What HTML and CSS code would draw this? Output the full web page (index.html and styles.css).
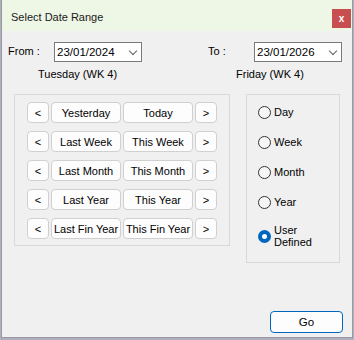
FILE: index.html
```html
<!doctype html>
<html lang="en">
<head>
  <meta charset="UTF-8">
  <title>Select Date Range</title>
  <link rel="stylesheet" href="styles.css">
</head>
<body>
<div id="dlg">
  <div id="dlg-title">
    <span class="title-text">Select Date Range</span>
    <button class="close" title="Close">x</button>
  </div>
  <div id="dlg-body">
    <div class="dates">
      <div class="field">
        <label>From :</label>
        <div class="combo"><span>23/01/2024</span><i class="chev"></i></div>
      </div>
      <div class="field">
        <label>To :</label>
        <div class="combo"><span>23/01/2026</span><i class="chev"></i></div>
      </div>
      <div class="day from-day">Tuesday (WK 4)</div>
      <div class="day to-day">Friday (WK 4)</div>
    </div>

    <div class="groups">
      <div class="box quick">
        <button class="nav">&lt;</button><button>Yesterday</button><button>Today</button><button class="nav">&gt;</button>
        <button class="nav">&lt;</button><button>Last Week</button><button>This Week</button><button class="nav">&gt;</button>
        <button class="nav">&lt;</button><button>Last Month</button><button>This Month</button><button class="nav">&gt;</button>
        <button class="nav">&lt;</button><button>Last Year</button><button>This Year</button><button class="nav">&gt;</button>
        <button class="nav">&lt;</button><button>Last Fin Year</button><button>This Fin Year</button><button class="nav">&gt;</button>
      </div>
      <div class="box modes">
        <label class="radio"><i></i><span>Day</span></label>
        <label class="radio"><i></i><span>Week</span></label>
        <label class="radio"><i></i><span>Month</span></label>
        <label class="radio"><i></i><span>Year</span></label>
        <label class="radio checked two"><i></i><span>User<br>Defined</span></label>
      </div>
    </div>
  </div>
  <div id="dlg-foot">
    <button class="go">Go</button>
  </div>
</div>
</body>
</html>
```

FILE: styles.css
```css
* {
  margin: 0;
  padding: 0;
  box-sizing: border-box;
}
html, body {
  height: 100%;
  width: 100%;
}
body {
  background: #aeb0c1;
  font-family: "Segoe UI", "Liberation Sans", Arial, sans-serif;
  font-size: 11px;
  color: #000;
  overflow: hidden;
}
#dlg {
  width: 352px;
  height: 338px;
  margin-left: 1px;
  background: #f0f0f0;
  border: 1px solid #9a9a9e;
  border-top: none;
  display: flex;
  flex-direction: column;
}
#dlg-title {
  height: 31px;
  background: #eef6e5;
  display: flex;
  justify-content: space-between;
  align-items: flex-start;
}
.title-text {
  font-size: 11px;
  line-height: 14px;
  padding: 10px 0 0 9px;
  color: #1a1a1a;
}
.close {
  width: 19px;
  height: 19px;
  margin: 9px 1px 0 0;
  border: none;
  background: #c84f4f;
  color: #fff;
  font-family: "Liberation Sans", Arial, sans-serif;
  font-weight: bold;
  font-size: 10px;
  line-height: 17px;
}

#dlg-body {
  padding: 11px 0 0 6px;
}
.dates {
  display: grid;
  grid-template-columns: 200px auto;
  row-gap: 5px;
}
.field {
  display: flex;
  align-items: center;
}
.field label {
  width: 46px;
  padding-bottom: 3px;
}
.combo {
  width: 88px;
  height: 20px;
  background: #fff;
  border: 1px solid #7a7a7a;
  display: flex;
  align-items: center;
  justify-content: space-between;
  padding: 0 5px 0 2px;
  font-size: 11.5px;
}
.chev {
  width: 6px;
  height: 6px;
  border-right: 1px solid #606060;
  border-bottom: 1px solid #606060;
  transform: rotate(45deg);
  margin: 0 0 3px 0;
}
.day {
  line-height: 14px;
}
.from-day {
  padding-left: 30px;
}
.to-day {
  padding-left: 28px;
}

.groups {
  display: flex;
  align-items: flex-start;
  gap: 16px;
  margin: 13px 0 0 6px;
}
.box {
  border: 1px solid #d8d8d8;
}
.quick {
  width: 216px;
  padding: 7px 12px 6px;
  display: grid;
  grid-template-columns: 22px 70px 70px 22px;
  column-gap: 2px;
  row-gap: 8px;
}
.quick button {
  height: 21px;
  background: #fdfdfd;
  border: 1px solid #d0d0d0;
  border-radius: 4px;
  font-family: inherit;
  font-size: 11px;
  color: #000;
  white-space: nowrap;
}
.modes {
  width: 94px;
  padding: 9px 0 14px 11px;
  display: flex;
  flex-direction: column;
  gap: 14px;
}
.radio {
  display: flex;
  align-items: center;
  gap: 3px;
  line-height: 16px;
}
.radio i {
  width: 13px;
  height: 13px;
  border-radius: 50%;
  border: 1px solid #333;
  background: #f6f6f6;
}
.radio.two {
  line-height: 12px;
}
.radio.checked i {
  border: 4px solid #0067c0;
  background: #fff;
}

#dlg-foot {
  margin-top: auto;
  display: flex;
  justify-content: flex-end;
  padding: 0 9px 4px 0;
}
.go {
  width: 73px;
  height: 22px;
  background: #fdfdfd;
  border: 1px solid #0067c0;
  border-radius: 4px;
  font-family: inherit;
  font-size: 11.5px;
  color: #000;
}
```
